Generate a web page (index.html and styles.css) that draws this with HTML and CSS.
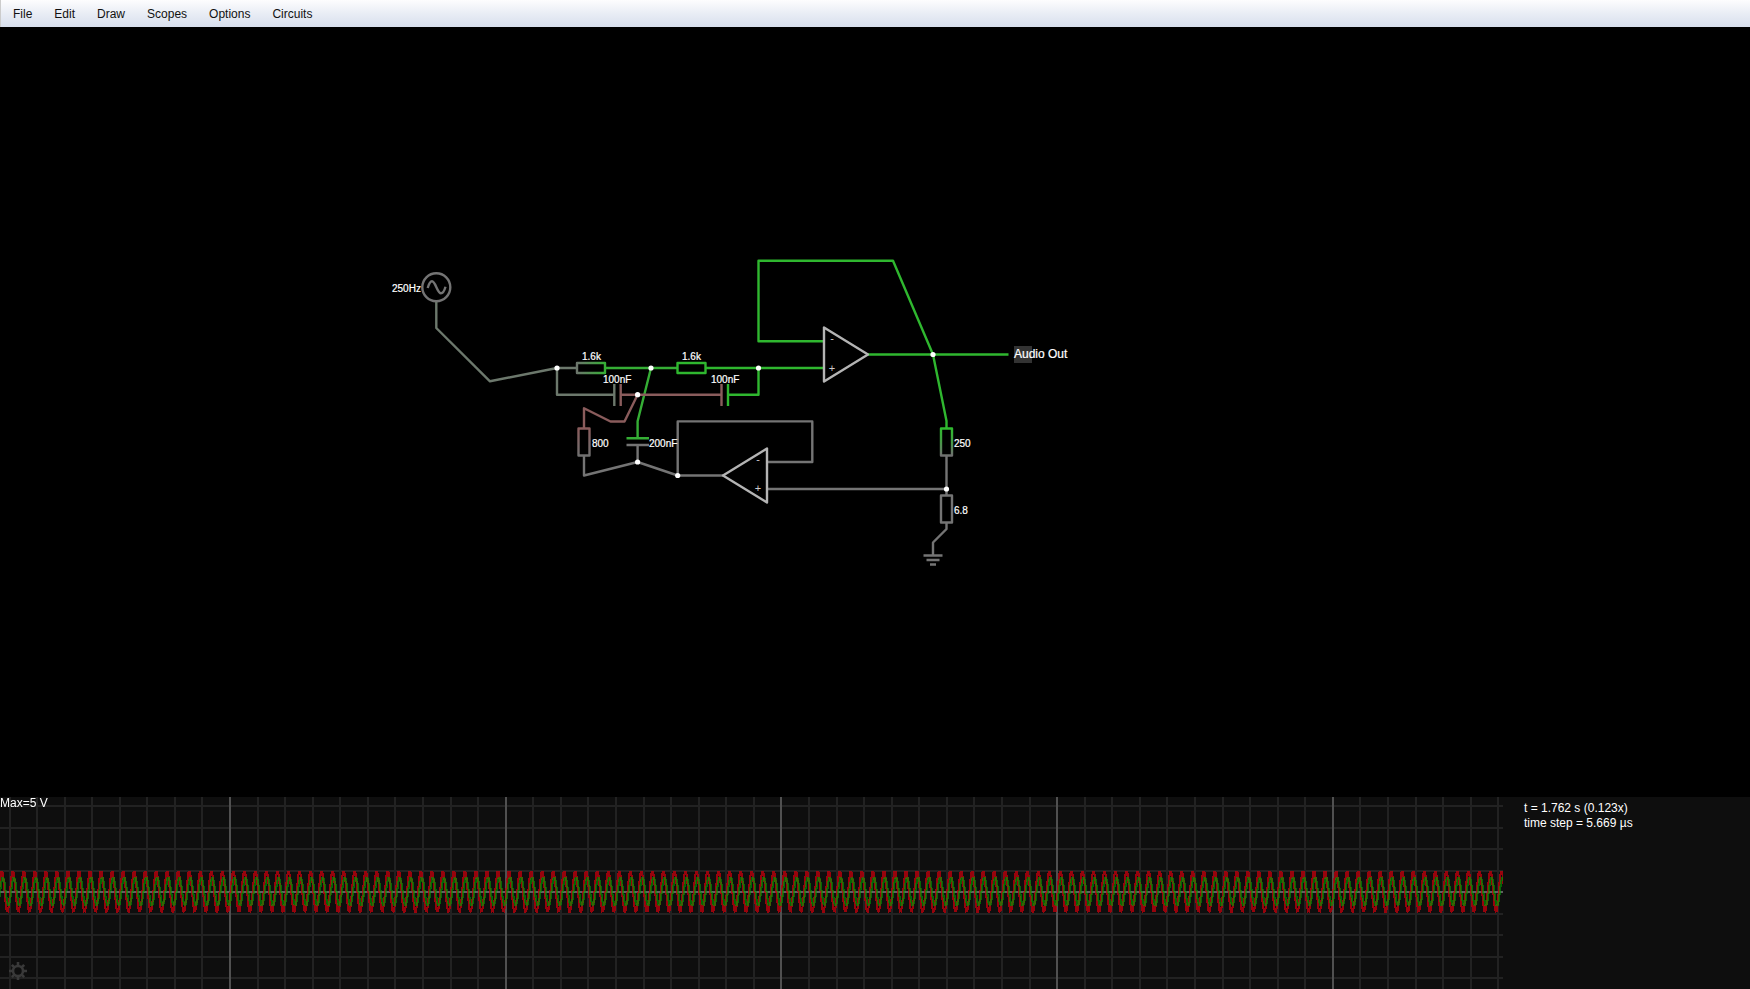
FILE: index.html
```html
<!DOCTYPE html>
<html lang="en">
<head>
<meta charset="utf-8">
<title>Circuit Simulator</title>
<link rel="stylesheet" href="styles.css">
</head>
<body>
<nav class="menubar" aria-label="Main menu">
  <button class="menu-item" type="button">File</button>
  <button class="menu-item" type="button">Edit</button>
  <button class="menu-item" type="button">Draw</button>
  <button class="menu-item" type="button">Scopes</button>
  <button class="menu-item" type="button">Options</button>
  <button class="menu-item" type="button">Circuits</button>
</nav>

<main class="workspace">
  <svg class="schematic" viewBox="0 27 1750 770" role="img" aria-label="Circuit schematic">
    <defs>
      <linearGradient id="r1" x1="0" x2="1" y1="0" y2="0"><stop offset="0" stop-color="#6c756c"/><stop offset="1" stop-color="#35ae35"/></linearGradient>
      <linearGradient id="r800" x1="0" x2="0" y1="0" y2="1"><stop offset="0" stop-color="#8a5c5c"/><stop offset="1" stop-color="#707070"/></linearGradient>
      <linearGradient id="r250" x1="0" x2="0" y1="0" y2="1"><stop offset="0" stop-color="#2fbb2f"/><stop offset="0.4" stop-color="#3fa43f"/><stop offset="1" stop-color="#707070"/></linearGradient>
    </defs>

    <!-- source and input wires -->
    <g class="wire sage">
      <circle class="neutral" cx="436.3" cy="287.3" r="14"/>
      <path class="neutral" d="M427.700 288C429 283.500 430.500 281.300 432 281.300C435.500 281.300 437.300 293.300 441 293.300C443 293.300 444.300 291 445.500 286.700"/>
      <path d="M436.300 302V328L490 381.300L557 368H577M557 368V394.700H614.300M614.300 384V406"/>
    </g>

    <!-- green nets -->
    <g class="wire green">
      <path class="mid" d="M605 368H677.500M651 368L637.600 421.300V438.300M626.500 438.300H649"/>
      <path d="M705.500 368H824M758.500 368V394.700H728M728 384V406"/>
      <path d="M824 341.200H758.500V260.700H893L933 354.500L946.500 421V428M868 354.500H1008.500"/>
      <rect x="677.500" y="363" width="28" height="10"/>
    </g>

    <!-- pink nets -->
    <g class="wire pink">
      <path d="M620.700 384V406M620.700 394.700H721.500M721.500 384V406"/>
      <path d="M637.600 394.700L624.500 421.500H610.500L584 408.200V428"/>
    </g>

    <!-- neutral nets -->
    <g class="wire neutral">
      <path d="M626.500 445H649M637.600 445V462M584 455.500V475.500L637.600 462L677.700 475.500H723M677.700 475.500V421.400H812.300V462H767M767 489H946.500"/>
      <path d="M946.500 455.500V495.500M946.500 523V529L933 542.500V555.500M923.500 555.500H942.500M926.500 560H939.500M930 564.500H936"/>
      <rect x="941" y="495.500" width="11" height="27"/>
    </g>

    <rect class="wire" stroke="url(#r1)" x="577" y="363" width="28" height="10"/>
    <rect class="wire" stroke="url(#r800)" x="578.500" y="428.500" width="11" height="27"/>
    <rect class="wire" stroke="url(#r250)" x="941" y="428.500" width="11" height="27"/>

    <g class="wire amp">
      <path d="M824 327.500V381.500L868 354.500Z"/>
      <path d="M767 448.500V502.500L723 475.500Z"/>
    </g>

    <g class="node">
      <circle cx="557" cy="368" r="2.600"/><circle cx="651" cy="368" r="2.600"/>
      <circle cx="758.500" cy="368" r="2.600"/><circle cx="637.600" cy="394.700" r="2.600"/>
      <circle cx="637.600" cy="462" r="2.600"/><circle cx="677.700" cy="475.500" r="2.600"/>
      <circle cx="933" cy="354.500" r="2.600"/><circle cx="946.500" cy="489" r="2.600"/>
    </g>

    <rect class="highlight" x="1014" y="346" width="18" height="17"/>
    <g class="value">
      <text x="392" y="292">250Hz</text>
      <text x="582" y="360">1.6k</text>
      <text x="682" y="360">1.6k</text>
      <text x="603" y="383">100nF</text>
      <text x="711" y="383">100nF</text>
      <text x="592" y="447">800</text>
      <text x="649" y="447">200nF</text>
      <text x="954" y="447">250</text>
      <text x="954" y="514">6.8</text>
    </g>
    <g class="sign">
      <text x="832" y="342">-</text><text x="832" y="372">+</text>
      <text x="758" y="463">-</text><text x="758" y="492">+</text>
    </g>
    <text class="output-label" x="1014" y="358">Audio Out</text>
  </svg>
</main>

<section class="scope-row" aria-label="Oscilloscope">
  <div class="scope">
    <canvas class="trace" id="trace"></canvas>
    <p class="scope-max">Max=5 V</p>
    <button class="gear" type="button" aria-label="Scope settings">
      <svg viewBox="0 0 20 20" width="20" height="20" aria-hidden="true">
        <circle cx="10" cy="10" r="5"/>
        <path d="M10 1V5M10 15V19M1 10H5M15 10H19M3.800 3.800L6.500 6.500M13.500 13.500L16.200 16.200M16.200 3.800L13.500 6.500M6.500 13.500L3.800 16.200"/>
      </svg>
    </button>
  </div>
  <div class="status">
    <p>t = 1.762 s (0.123x)</p>
    <p>time step = 5.669 µs</p>
  </div>
</section>
<script src="scope.js"></script>
</body>
</html>
```

FILE: styles.css
```css
* { box-sizing: border-box; }

body {
  margin: 0;
  height: 100vh;
  display: flex;
  flex-direction: column;
  overflow: hidden;
  background: #000;
  color: #fff;
  font: 12px/15px "Liberation Sans", Arial, sans-serif;
}

p { margin: 0; }

.menubar {
  display: flex;
  height: 27px;
  padding-left: 1px;
  border-left: 1px solid #ccc;
  background: linear-gradient(#fdfdfe, #e9edf5 50%, #d8dfed);
}

.menu-item {
  border: 0;
  padding: 2px 11px 0;
  background: none;
  color: #111;
  font: inherit;
}

.workspace { flex: 1; min-height: 0; }

.schematic { display: block; width: 100%; height: 100%; }

.wire { fill: none; stroke-width: 2.4; stroke-linejoin: round; }
.sage { stroke: #6c786c; }
.green { stroke: #2fb72f; }
.mid { stroke: #35ae35; }
.pink { stroke: #8a5c5c; }
.neutral { stroke: #747474; }
.amp { stroke: #b4b4b4; }
.node { fill: #fff; }
.highlight { fill: #333; }

.value { fill: #fff; font-size: 10px; stroke: #fff; stroke-width: 0.2px; }
.sign { fill: #ccc; font-size: 11px; text-anchor: middle; }
.output-label { fill: #fff; font-size: 12px; stroke: #fff; stroke-width: 0.2px; }

.scope-row {
  display: grid;
  grid-template-columns: 1fr 247px;
  height: 192px;
  background: #0e0e0e;
}

.scope { position: relative; min-width: 0; }

.trace { display: block; width: 100%; height: 192px; }

.scope-max { position: absolute; left: 0; top: -1px; }

.gear {
  position: absolute;
  left: 8px;
  bottom: 8px;
  border: 0;
  padding: 0;
  background: none;
}

.gear svg { display: block; fill: none; stroke: #393939; stroke-width: 2.6; }

.status { padding: 4px 0 0 21px; }
```

FILE: scope.js
```js
const canvas = document.getElementById("trace");
const ctx = canvas.getContext("2d");

const MID = 94;
const DIV_X = 27.57;
const DIV_Y = 21.5;
const PERIOD = 11.027;

function drawGrid(w, h) {
  ctx.fillStyle = "#222";
  for (let i = -4; i <= 4; i++) {
    if (i !== 0) ctx.fillRect(0, Math.round(MID + 1 + i * DIV_Y) - 1, w, 2);
  }
  for (let n = 0; 10 + n * DIV_X < w; n++) {
    ctx.fillStyle = n % 10 === 8 ? "#505050" : "#222";
    ctx.fillRect(Math.round(9.5 + n * DIV_X) - 1, 0, 2, h);
  }
  ctx.fillStyle = "#606060";
  ctx.fillRect(0, MID, w, 2);
}

// Each column shows the range of values sampled within it.
function drawWave(w, color, amplitude, peak) {
  ctx.fillStyle = color;
  for (let x = 0; x < w; x++) {
    let lo = Infinity, hi = -Infinity;
    for (let s = 0; s <= 8; s++) {
      const t = x - 0.5 + s * 0.25;
      const y = MID + 1 - amplitude * Math.cos(2 * Math.PI * (t - peak) / PERIOD);
      lo = Math.min(lo, y);
      hi = Math.max(hi, y);
    }
    ctx.fillRect(x, Math.round(lo) - 1, 1, Math.max(2, Math.round(hi - lo) + 1));
  }
}

function draw() {
  const w = canvas.width = canvas.clientWidth;
  const h = canvas.height = canvas.clientHeight;
  drawGrid(w, h);
  drawWave(w, "rgba(190, 0, 12, 0.78)", 20.5, 1.8);
  drawWave(w, "rgba(0, 160, 0, 0.6)", 14, 2.9);
}

draw();
addEventListener("resize", draw);
```
